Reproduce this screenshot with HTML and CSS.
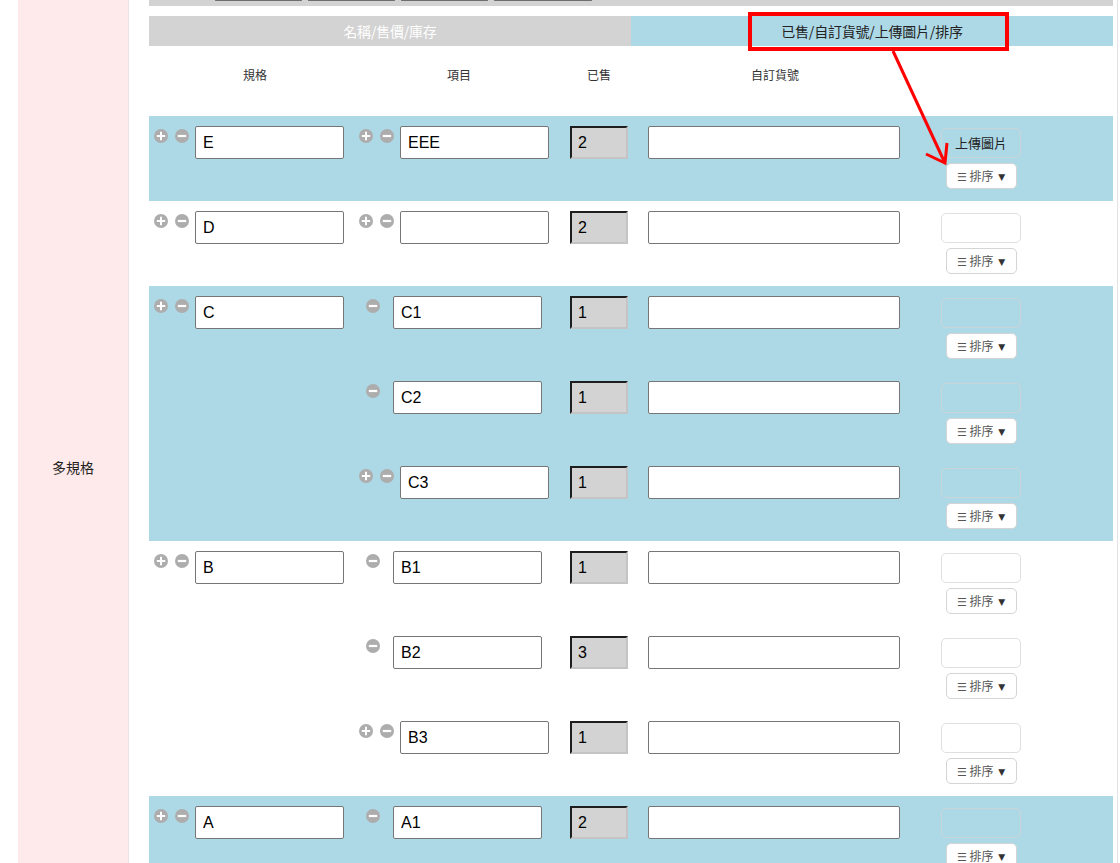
FILE: index.html
```html
<!DOCTYPE html>
<html lang="zh-Hant">
<head>
    <meta charset="UTF-8">
    <meta name="viewport" content="width=device-width, initial-scale=1.0">
    <title>多規格設定</title>
    <link rel="stylesheet" href="styles.css">
</head>
<body>
    <svg class="sprite" aria-hidden="true">
        <symbol id="i-plus" viewBox="0 0 14 14">
            <circle cx="7" cy="7" r="7" fill="#adadad"/>
            <path d="M7 2.8v8.4M2.8 7h8.4" stroke="#fff" stroke-width="2"/>
        </symbol>
        <symbol id="i-minus" viewBox="0 0 14 14">
            <circle cx="7" cy="7" r="7" fill="#adadad"/>
            <path d="M2.8 7h8.4" stroke="#fff" stroke-width="2.2"/>
        </symbol>
    </svg>

    <div class="page">
        <div class="label-cell">多規格</div>
        <div class="content">
            <div class="toolbar">
                <span class="tool-btn"></span>
                <span class="tool-btn"></span>
                <span class="tool-btn"></span>
                <span class="tool-btn tool-btn--wide"></span>
            </div>
            <div class="tabs">
                <div class="tab tab--off">名稱/售價/庫存</div>
                <div class="tab tab--on">已售/自訂貨號/上傳圖片/排序</div>
            </div>
            <div class="col-heads">
                <span>規格</span>
                <span>項目</span>
                <span>已售</span>
                <span>自訂貨號</span>
                <span></span>
            </div>

            <!-- E -->
            <div class="spec spec--blue">
                <div class="ctrl spec-name">
                    <svg class="icon icon--plus"><use href="#i-plus"/></svg>
                    <svg class="icon icon--minus"><use href="#i-minus"/></svg>
                    <input class="field" value="E">
                </div>
                <div class="items">
                    <div class="item">
                        <div class="ctrl">
                            <svg class="icon icon--plus"><use href="#i-plus"/></svg>
                            <svg class="icon icon--minus"><use href="#i-minus"/></svg>
                            <input class="field" value="EEE">
                        </div>
                        <div class="ctrl"><input class="sold" value="2" readonly></div>
                        <div class="ctrl"><input class="field field--code" value=""></div>
                        <div class="media">
                            <div class="upload">上傳圖片</div>
                            <div class="sort"><span class="bars">☰</span> 排序 <span class="caret">▼</span></div>
                        </div>
                    </div>
                </div>
            </div>

            <!-- D -->
            <div class="spec">
                <div class="ctrl spec-name">
                    <svg class="icon icon--plus"><use href="#i-plus"/></svg>
                    <svg class="icon icon--minus"><use href="#i-minus"/></svg>
                    <input class="field" value="D">
                </div>
                <div class="items">
                    <div class="item">
                        <div class="ctrl">
                            <svg class="icon icon--plus"><use href="#i-plus"/></svg>
                            <svg class="icon icon--minus"><use href="#i-minus"/></svg>
                            <input class="field" value="">
                        </div>
                        <div class="ctrl"><input class="sold" value="2" readonly></div>
                        <div class="ctrl"><input class="field field--code" value=""></div>
                        <div class="media">
                            <div class="upload"></div>
                            <div class="sort"><span class="bars">☰</span> 排序 <span class="caret">▼</span></div>
                        </div>
                    </div>
                </div>
            </div>

            <!-- C -->
            <div class="spec spec--blue">
                <div class="ctrl spec-name">
                    <svg class="icon icon--plus"><use href="#i-plus"/></svg>
                    <svg class="icon icon--minus"><use href="#i-minus"/></svg>
                    <input class="field" value="C">
                </div>
                <div class="items">
                    <div class="item">
                        <div class="ctrl">
                            <svg class="icon icon--solo"><use href="#i-minus"/></svg>
                            <input class="field" value="C1">
                        </div>
                        <div class="ctrl"><input class="sold" value="1" readonly></div>
                        <div class="ctrl"><input class="field field--code" value=""></div>
                        <div class="media">
                            <div class="upload"></div>
                            <div class="sort"><span class="bars">☰</span> 排序 <span class="caret">▼</span></div>
                        </div>
                    </div>
                    <div class="item">
                        <div class="ctrl">
                            <svg class="icon icon--solo"><use href="#i-minus"/></svg>
                            <input class="field" value="C2">
                        </div>
                        <div class="ctrl"><input class="sold" value="1" readonly></div>
                        <div class="ctrl"><input class="field field--code" value=""></div>
                        <div class="media">
                            <div class="upload"></div>
                            <div class="sort"><span class="bars">☰</span> 排序 <span class="caret">▼</span></div>
                        </div>
                    </div>
                    <div class="item">
                        <div class="ctrl">
                            <svg class="icon icon--plus"><use href="#i-plus"/></svg>
                            <svg class="icon icon--minus"><use href="#i-minus"/></svg>
                            <input class="field" value="C3">
                        </div>
                        <div class="ctrl"><input class="sold" value="1" readonly></div>
                        <div class="ctrl"><input class="field field--code" value=""></div>
                        <div class="media">
                            <div class="upload"></div>
                            <div class="sort"><span class="bars">☰</span> 排序 <span class="caret">▼</span></div>
                        </div>
                    </div>
                </div>
            </div>

            <!-- B -->
            <div class="spec">
                <div class="ctrl spec-name">
                    <svg class="icon icon--plus"><use href="#i-plus"/></svg>
                    <svg class="icon icon--minus"><use href="#i-minus"/></svg>
                    <input class="field" value="B">
                </div>
                <div class="items">
                    <div class="item">
                        <div class="ctrl">
                            <svg class="icon icon--solo"><use href="#i-minus"/></svg>
                            <input class="field" value="B1">
                        </div>
                        <div class="ctrl"><input class="sold" value="1" readonly></div>
                        <div class="ctrl"><input class="field field--code" value=""></div>
                        <div class="media">
                            <div class="upload"></div>
                            <div class="sort"><span class="bars">☰</span> 排序 <span class="caret">▼</span></div>
                        </div>
                    </div>
                    <div class="item">
                        <div class="ctrl">
                            <svg class="icon icon--solo"><use href="#i-minus"/></svg>
                            <input class="field" value="B2">
                        </div>
                        <div class="ctrl"><input class="sold" value="3" readonly></div>
                        <div class="ctrl"><input class="field field--code" value=""></div>
                        <div class="media">
                            <div class="upload"></div>
                            <div class="sort"><span class="bars">☰</span> 排序 <span class="caret">▼</span></div>
                        </div>
                    </div>
                    <div class="item">
                        <div class="ctrl">
                            <svg class="icon icon--plus"><use href="#i-plus"/></svg>
                            <svg class="icon icon--minus"><use href="#i-minus"/></svg>
                            <input class="field" value="B3">
                        </div>
                        <div class="ctrl"><input class="sold" value="1" readonly></div>
                        <div class="ctrl"><input class="field field--code" value=""></div>
                        <div class="media">
                            <div class="upload"></div>
                            <div class="sort"><span class="bars">☰</span> 排序 <span class="caret">▼</span></div>
                        </div>
                    </div>
                </div>
            </div>

            <!-- A -->
            <div class="spec spec--blue">
                <div class="ctrl spec-name">
                    <svg class="icon icon--plus"><use href="#i-plus"/></svg>
                    <svg class="icon icon--minus"><use href="#i-minus"/></svg>
                    <input class="field" value="A">
                </div>
                <div class="items">
                    <div class="item">
                        <div class="ctrl">
                            <svg class="icon icon--solo"><use href="#i-minus"/></svg>
                            <input class="field" value="A1">
                        </div>
                        <div class="ctrl"><input class="sold" value="2" readonly></div>
                        <div class="ctrl"><input class="field field--code" value=""></div>
                        <div class="media">
                            <div class="upload"></div>
                            <div class="sort"><span class="bars">☰</span> 排序 <span class="caret">▼</span></div>
                        </div>
                    </div>
                    <div class="item">
                        <div class="ctrl">
                            <svg class="icon icon--plus"><use href="#i-plus"/></svg>
                            <svg class="icon icon--minus"><use href="#i-minus"/></svg>
                            <input class="field" value="A2">
                        </div>
                        <div class="ctrl"><input class="sold" value="1" readonly></div>
                        <div class="ctrl"><input class="field field--code" value=""></div>
                        <div class="media">
                            <div class="upload"></div>
                            <div class="sort"><span class="bars">☰</span> 排序 <span class="caret">▼</span></div>
                        </div>
                    </div>
                </div>
            </div>
        </div>
    </div>

    <!-- red callout over the active tab -->
    <div class="callout"></div>
    <svg class="callout-arrow" width="1120" height="863">
        <line x1="893" y1="51" x2="944" y2="161" stroke="#f00" stroke-width="3"/>
        <polyline points="926,154 945,163 947,143" fill="none" stroke="#f00" stroke-width="3"/>
    </svg>
</body>
</html>
```

FILE: styles.css
```css
*{
    padding: 0;
    margin: 0;
    box-sizing: border-box;
}
html, body{
    height: 863px;
    overflow: hidden;
}
body{
    position: relative;
    font-family: "Noto Sans CJK TC", "Noto Sans", sans-serif;
    color: #222;
    background: #fff;
}
.sprite{
    position: absolute;
    width: 0;
    height: 0;
}

.page{
    display: flex;
    align-items: stretch;
    margin-top: -30px;
    padding-left: 18px;
}
.label-cell{
    width: 111px;
    flex: none;
    background-color: #feeaea;
    border-right: 1px solid #ece2e2;
    display: flex;
    align-items: center;
    justify-content: center;
    font-size: 14px;
    color: #222;
    padding-bottom: 2px;
}
.content{
    width: 969px;
    margin-left: 20px;
    padding-right: 4px;
    border-right: 1px solid #e3e3e3;
}

/* toolbar, only its lower edge is on screen */
.toolbar{
    height: 36px;
    background-color: #d3d3d3;
    padding: 5px 0 0 66px;
    display: flex;
    gap: 6px;
}
.tool-btn{
    width: 87px;
    height: 26px;
    background: #f2f2f2;
    border: 1px solid #999;
    border-bottom: 2px solid #6e6e6e;
}
.tool-btn--wide{
    width: 98px;
}

.tabs{
    display: flex;
    margin-top: 10px;
    height: 30px;
}
.tab{
    flex: 1;
    text-align: center;
    font-size: 14px;
    line-height: 30px;
    letter-spacing: -0.2px;
}
.tab--off{
    background-color: #d3d3d3;
    color: #fff;
}
.tab--on{
    background-color: #add8e6;
    color: #222;
}

.col-heads{
    display: grid;
    grid-template-columns: 212px 196px 84px 268px 1fr;
    height: 70px;
    padding-top: 21px;
    font-size: 12px;
    line-height: 16px;
    text-align: center;
    color: #333;
}

.spec{
    display: grid;
    grid-template-columns: 200px 1fr;
}
.spec--blue{
    background-color: #add8e6;
}
.item{
    display: grid;
    grid-template-columns: 210px 80px 270px 144px;
    height: 85px;
    align-items: start;
}
.ctrl{
    display: flex;
    justify-content: center;
    align-items: flex-start;
    padding-top: 10px;
}

.icon{
    width: 14px;
    height: 14px;
    flex: none;
    margin-top: 3px;
}
.icon--plus{
    margin-right: 7px;
}
.icon--minus{
    margin-right: 6px;
}
.icon--solo{
    margin-right: 13px;
}

.field{
    width: 149px;
    height: 33px;
    border: 1px solid #767676;
    border-radius: 2px;
    padding: 0 7px;
    font-family: "Liberation Sans", Arial, sans-serif;
    font-size: 16px;
    color: #000;
    background: #fff;
    outline: none;
}
.field--code{
    width: 252px;
}
.sold{
    width: 58px;
    height: 33px;
    padding: 0 6px;
    background: #d3d3d3;
    border-style: solid;
    border-width: 2px;
    border-color: #1e1e1e #c4c4c4 #c4c4c4 #1e1e1e;
    font-family: "Liberation Sans", Arial, sans-serif;
    font-size: 16px;
    color: #000;
    outline: none;
}

.media{
    align-self: center;
    display: flex;
    flex-direction: column;
    align-items: center;
    gap: 5px;
}
.upload{
    width: 80px;
    height: 30px;
    border: 1px solid rgba(212, 212, 212, 0.75);
    border-radius: 5px;
    text-align: center;
    font-size: 13px;
    line-height: 28px;
    color: #222;
}
.sort{
    width: 71px;
    height: 26px;
    background: #fff;
    border: 1px solid #d4d4d4;
    border-radius: 5px;
    text-align: center;
    font-size: 12px;
    line-height: 24px;
    color: #555;
}
.bars{
    font-family: "DejaVu Sans", sans-serif;
    font-size: 11px;
}
.caret{
    font-family: "DejaVu Sans", sans-serif;
    font-size: 9px;
    color: #333;
    margin-left: 2px;
    vertical-align: 1px;
}

.callout{
    position: absolute;
    left: 748px;
    top: 12px;
    width: 261px;
    height: 39px;
    border: 4px solid #f00;
}
.callout-arrow{
    position: absolute;
    left: 0;
    top: 0;
    pointer-events: none;
}
```
